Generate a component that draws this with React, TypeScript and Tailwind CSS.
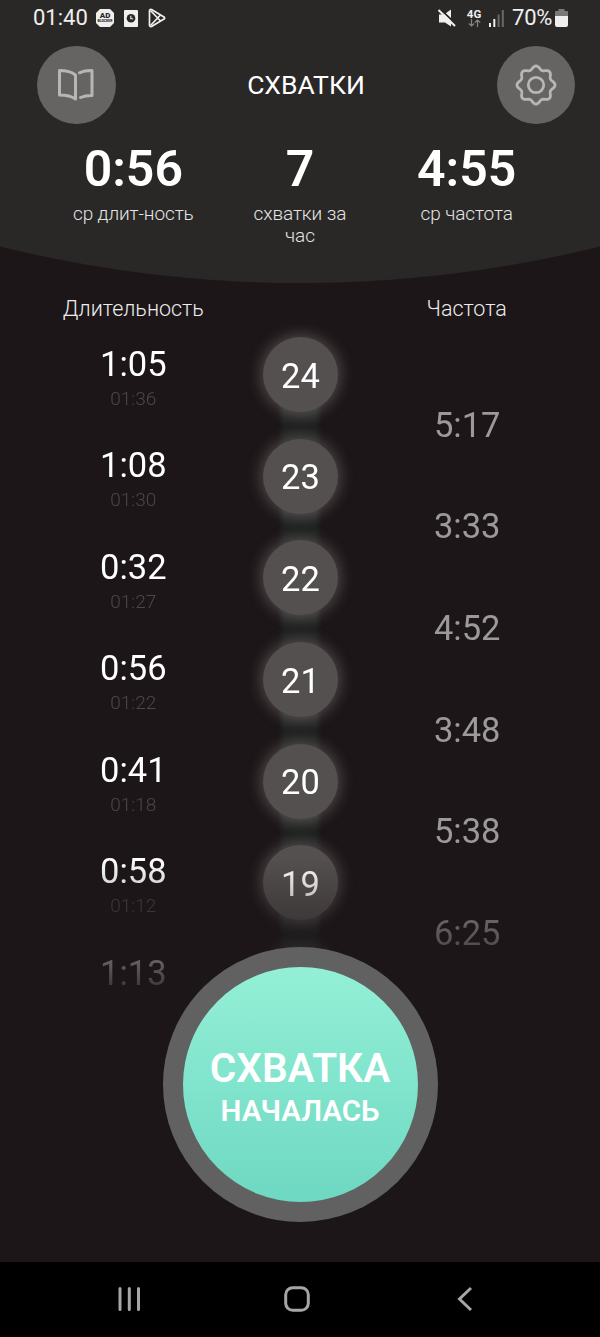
import React from "react";

const contractions = [
  { id: 24, duration: "1:05", time: "01:36" },
  { id: 23, duration: "1:08", time: "01:30" },
  { id: 22, duration: "0:32", time: "01:27" },
  { id: 21, duration: "0:56", time: "01:22" },
  { id: 20, duration: "0:41", time: "01:18" },
  { id: 19, duration: "0:58", time: "01:12" },
  { id: 18, duration: "1:13", time: "" },
];

const intervals = ["5:17", "3:33", "4:52", "3:48", "5:38", "6:25"];

const stats = [
  { value: "0:56", label: "ср длит-ность" },
  { value: "7", label: "схватки за\nчас" },
  { value: "4:55", label: "ср частота" },
];

// Outline of the eight-lobed gear
const gearPoints = Array.from({ length: 144 }, (_, i) => {
  const a = (i / 144) * Math.PI * 2;
  const r = 17.3 + 1.7 * Math.cos(8 * a);
  return `${(22 + r * Math.cos(a)).toFixed(2)},${(22 + r * Math.sin(a)).toFixed(2)}`;
}).join(" ");

const StatusBar = () => (
  <div className="flex h-9 items-center justify-between pl-[33px] pr-8 text-[22px] leading-9 text-[#efefef]">
    <div className="flex items-center">
      <span className="w-[54px]">01:40</span>
      <svg className="ml-[9px]" width="18" height="18" viewBox="0 0 18 18">
        <path d="M4 0h10l4 4v10l-4 4H4l-4-4V4z" fill="#efefef" />
        <text x="9" y="8.8" textAnchor="middle" fontSize="8" fontWeight="900" fontFamily="Roboto" fill="#292827">AD</text>
        <text x="9" y="12.8" textAnchor="middle" fontSize="3.4" fontWeight="900" fontFamily="Roboto" fill="#292827">BLOCKER</text>
      </svg>
      <svg className="ml-2.5" width="14" height="17" viewBox="0 0 14 17">
        <rect width="14" height="17" rx="1" fill="#efefef" />
        <circle cx="7" cy="8.3" r="4.3" fill="#292827" />
        <path d="M6.8 5.8v2.9h2.4" fill="none" stroke="#efefef" strokeWidth="1.1" />
      </svg>
      <svg className="ml-2.5" width="18" height="20" viewBox="0 0 18 20" fill="none" stroke="#efefef" strokeWidth="1.7" strokeLinejoin="round">
        <path d="M3.500 1.500 16 9q1.300 1 0 2L3.500 18.500q-2 .6-2-1.500V3Q1.500.9 3.500 1.500Z" />
        <path d="M2.500 2.500 12.500 13M2.500 17.500 12.500 7" />
      </svg>
    </div>
    <div className="flex items-center">
      <svg width="18" height="18" viewBox="0 0 18 18">
        <path d="M1 5.500h5l7-5v17L7 13.500H1z" fill="#efefef" />
        <path d="M1.500-.5 18.500 15.500" stroke="#292827" strokeWidth="1.800" />
        <path d="M.5 1 17 17" stroke="#efefef" strokeWidth="2" />
      </svg>
      <div className="ml-2.5 flex w-4 flex-col items-center">
        <span className="text-[11.5px] font-bold leading-[10px]">4G</span>
        <svg width="13" height="8" viewBox="0 0 13 8" fill="none" stroke="#858483" strokeWidth="1.2">
          <path d="M3.500 0v7M.8 4.500 3.500 7l2.700-2.500M9.500 8V1M6.800 3.500 9.500 1l2.700 2.500" />
        </svg>
      </div>
      <svg className="ml-[7px]" width="15" height="17" viewBox="0 0 15 17">
        <path d="M0 13h2v4H0zM4.300 9h2v8h-2z" fill="#efefef" />
        <path d="M8.600 4.500h2V17h-2zM12.800 0h2v17h-2z" fill="#6a6968" />
      </svg>
      <span className="ml-2 w-[43px] whitespace-nowrap tracking-[-0.2px]">70%</span>
      <svg width="13" height="18" viewBox="0 0 13 18">
        <path d="M3.500 0h6v2H12q1 0 1 1v5H0V3q0-1 1-1h2.500z" fill="#7a7978" />
        <path d="M0 7h13v9q0 2-2 2H2q-2 0-2-2z" fill="#efefef" />
      </svg>
    </div>
  </div>
);

const Header = () => (
  <header className="h-[283px] bg-[#292827] [clip-path:circle(1251px_at_50%_-968px)]">
    <StatusBar />
    <div className="mt-[9.5px] flex items-center justify-between pl-[37px] pr-[25px]">
      <button className="flex size-[78.5px] items-center justify-center rounded-full bg-[#656463]">
        <svg width="38" height="34" viewBox="0 0 38 34" fill="none" stroke="#b7b6b5" strokeWidth="3" strokeLinejoin="round" strokeLinecap="round">
          <path d="M18.500 31V7Q13 2.500 2.500 2.500V27Q13 27 18.500 31Z" />
          <path d="M22.500 4.800Q27 2.500 35 2.500V27.500Q28 27.500 23.500 29.500" />
        </svg>
      </button>
      <h1 className="text-[26.5px] leading-8 text-white">СХВАТКИ</h1>
      <button className="flex size-[78.5px] items-center justify-center rounded-full bg-[#656463]">
        <svg width="44" height="44" viewBox="0 0 44 44" fill="none" stroke="#b7b6b5" strokeWidth="2.800">
          <polygon points={gearPoints} strokeLinejoin="round" />
          <circle cx="22" cy="22" r="7.700" />
        </svg>
      </button>
    </div>
    <div className="mt-4 grid grid-cols-3 px-[50px] text-center">
      {stats.map((s) => (
        <div key={s.label} className="flex flex-col items-center">
          <span className="text-[50px] font-semibold leading-[58px] text-white">{s.value}</span>
          <span className="mt-[5px] whitespace-pre text-[19px] font-light leading-[22px] tracking-[-0.1px] text-[#e4e4e4]">{s.label}</span>
        </div>
      ))}
    </div>
  </header>
);

const History = () => (
  <section className="grid h-[690px] grid-cols-3 overflow-hidden px-[50px] text-center [mask-image:linear-gradient(to_bottom,#000_535px,transparent_685px)]">
    <div>
      {contractions.map((c) => (
        <div key={c.id} className="h-[101.6px] pt-[19.5px]">
          <div className="text-[34.5px] leading-[41px] text-white">{c.duration}</div>
          <div className="mt-[3px] text-[19px] font-light leading-[22px] text-[#4c4648]">{c.time}</div>
        </div>
      ))}
    </div>
    <div>
      {contractions.map((c, i) => (
        <div key={c.id} className="relative flex h-[101.6px] items-center justify-center">
          {i < contractions.length - 1 && (
            <div className="absolute left-1/2 top-[80px] h-[44px] w-[38px] -translate-x-1/2 bg-linear-to-b from-[#303130] via-[#1f2120] to-[#232423] blur-[2px]" />
          )}
          <div className="relative left-[0.5px] flex size-[75px] items-center justify-center rounded-full bg-[#555050] pt-[3px] text-[34.5px] leading-[41px] text-white shadow-[0_0_14px_3px_rgba(150,142,140,0.4)]">
            {c.id}
          </div>
        </div>
      ))}
    </div>
    <div className="pt-[50.5px]">
      {intervals.map((value) => (
        <div key={value} className="flex h-[101.6px] items-center justify-center pl-px text-[34.5px] leading-[41px] text-[#9c999a]">
          {value}
        </div>
      ))}
    </div>
  </section>
);

const App = () => {
  return (
    <div className="flex h-[1337px] w-[600px] flex-col overflow-hidden bg-[#1c1618] font-[Roboto,sans-serif]">
      <Header />
      <div className="mt-[12px] grid h-[29px] shrink-0 grid-cols-3 px-[50px] pt-px text-center text-[21.5px] font-light leading-[26px] text-[#ededed]">
        <span>Длительность</span>
        <span />
        <span>Частота</span>
      </div>
      <History />
      <div className="relative mt-[-67px] flex justify-center">
        <button className="flex size-[275px] flex-col items-center justify-center rounded-full border-[20px] border-[#616161] bg-linear-to-b from-[#96f2d8] to-[#6bd6c0] bg-origin-border pt-[7px] text-white">
          <span className="text-[40.5px] font-semibold leading-[46px]">СХВАТКА</span>
          <span className="text-[29.5px] font-semibold leading-[40px]">НАЧАЛАСЬ</span>
        </button>
      </div>
      <nav className="mt-auto flex h-[75px] shrink-0 items-center justify-between bg-black pb-[2px] pl-[117px] pr-[127px]">
        <svg width="24" height="26" viewBox="0 0 24 26" stroke="#a6a6a6" strokeWidth="3" strokeLinecap="round">
          <path d="M3 2.500v21M12.300 2.500v21M21.500 2.500v21" />
        </svg>
        <svg className="mr-[3px]" width="26" height="26" viewBox="0 0 26 26" fill="none" stroke="#a6a6a6" strokeWidth="3">
          <rect x="1.700" y="1.700" width="22.600" height="22.600" rx="7" />
        </svg>
        <svg width="17" height="26" viewBox="0 0 17 26" fill="none" stroke="#a6a6a6" strokeWidth="3">
          <path d="M15 2 3.500 13 15 24" />
        </svg>
      </nav>
    </div>
  );
};

export default App;
